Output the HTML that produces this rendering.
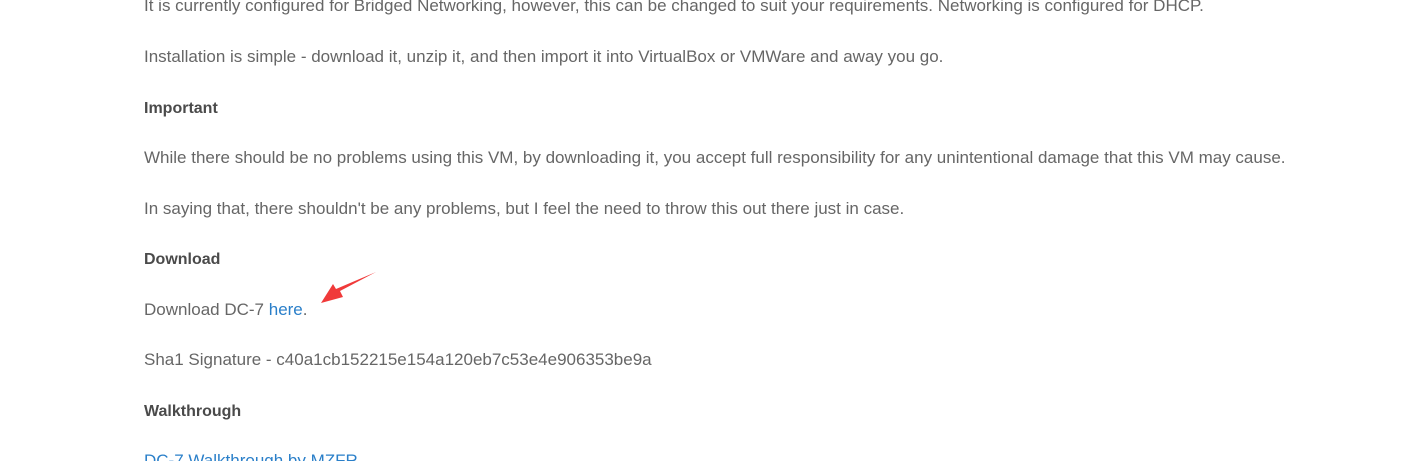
<!DOCTYPE html>
<html><head><meta charset="utf-8"><style>
html,body{margin:0;padding:0;background:#fff;width:1414px;height:461px;overflow:hidden}
body{font-family:"Liberation Sans",sans-serif;font-size:17px;color:#666;position:relative}
p{position:absolute;left:144px;margin:0;line-height:20px;white-space:nowrap}
b{font-weight:bold;color:#4a4a4a;font-size:16px}
a{color:#2a7fc9;text-decoration:none}
a.u{text-decoration:underline}
</style></head><body>
<p style="top:-4px">It is currently configured for Bridged Networking, however, this can be changed to suit your requirements. Networking is configured for DHCP.</p>
<p style="top:47px">Installation is simple - download it, unzip it, and then import it into VirtualBox or VMWare and away you go.</p>
<p style="top:98px"><b>Important</b></p>
<p style="top:148px">While there should be no problems using this VM, by downloading it, you accept full responsibility for any unintentional damage that this VM may cause.</p>
<p style="top:199px">In saying that, there shouldn't be any problems, but I feel the need to throw this out there just in case.</p>
<p style="top:249px"><b>Download</b></p>
<p style="top:300px">Download DC-7 <a href="#">here</a>.</p>
<p style="top:350px">Sha1 Signature - c40a1cb152215e154a120eb7c53e4e906353be9a</p>
<p style="top:401px"><b>Walkthrough</b></p>
<p style="top:451px"><a class="u" href="#">DC-7 Walkthrough by MZFR</a></p>
<svg style="position:absolute;left:0;top:0" width="1414" height="461">
<path d="M376 272 L340 291 L343 297 L321 303 L333 284 L336 289 Z" fill="#f03a3a"/>
</svg>
</body></html>
